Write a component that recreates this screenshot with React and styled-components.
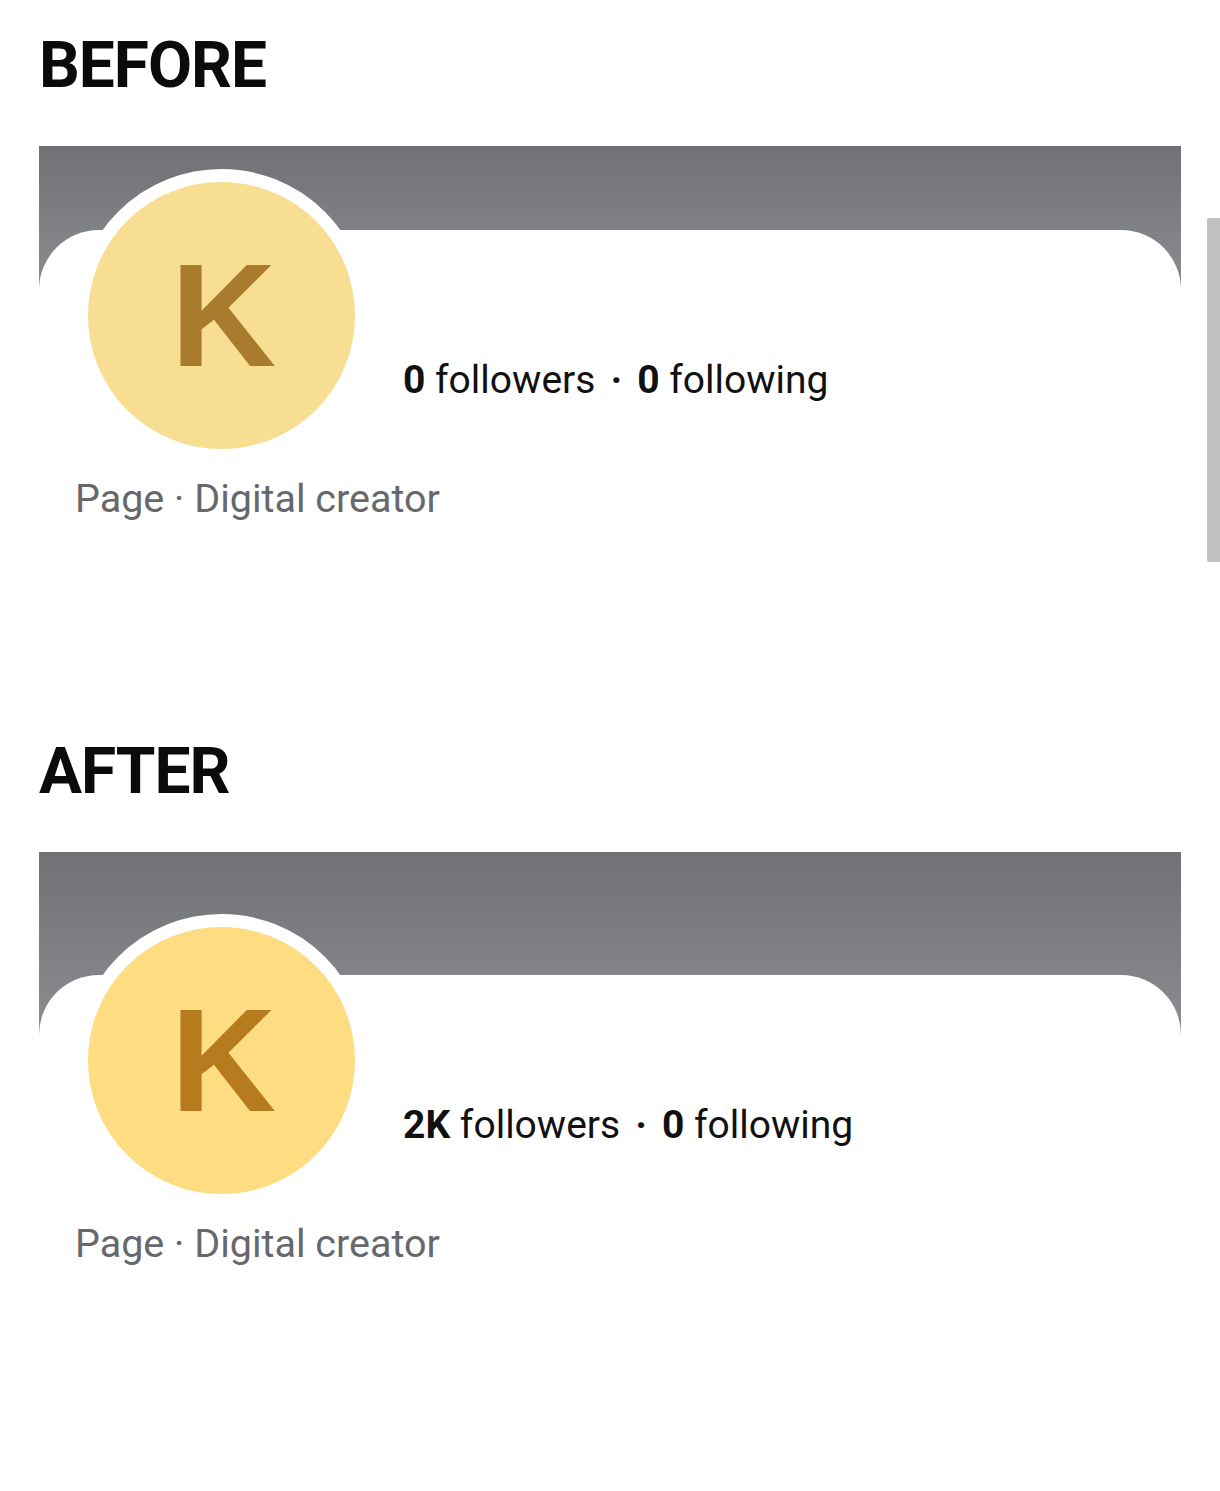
import React from "react";
import styled, { createGlobalStyle } from "styled-components";

const GlobalStyle = createGlobalStyle`
  html, body {
    margin: 0;
    padding: 0;
    background: #ffffff;
  }
  body {
    font-family: Roboto, "Noto Sans", "Liberation Sans", sans-serif;
    color: #111111;
  }
`;

const Page = styled.main`
  position: relative;
  min-height: 1491px;
  padding: 34px 39px 0 39px;
  box-sizing: border-box;
`;

const Section = styled.section`
  display: flex;
  flex-direction: column;
  margin-bottom: ${(p) => p.$spaceAfter}px;
`;

const Heading = styled.h1`
  margin: 0 0 48px 0;
  font-family: Roboto, "Liberation Sans", sans-serif;
  font-weight: 700;
  font-size: 64px;
  line-height: 64px;
  letter-spacing: -1px;
  color: #0b0b0b;
`;

const Profile = styled.div`
  display: flex;
  flex-direction: column;
`;

const Cover = styled.div`
  height: ${(p) => p.$band + 60}px;
  background: linear-gradient(180deg, #6f7174 0%, #8b8d90 100%);
`;

const Card = styled.div`
  margin-top: -60px;
  background: #ffffff;
  border-radius: 60px 60px 0 0;
  padding: 0 36px;
  display: flex;
  flex-direction: column;
`;

const HeaderRow = styled.div`
  display: flex;
  align-items: flex-end;
  margin-top: -61px;
`;

const Avatar = styled.div`
  flex: none;
  width: 267px;
  height: 267px;
  border: 13px solid #ffffff;
  border-radius: 50%;
  background: ${(p) => p.$fill};
  display: flex;
  align-items: center;
  justify-content: center;
`;

const Initial = styled.span`
  font-family: "Liberation Sans", Arial, sans-serif;
  font-weight: 700;
  font-size: 146px;
  line-height: 146px;
  color: ${(p) => p.$ink};
  transform: translate(2px, 0);
`;

const Stats = styled.div`
  margin: 0 0 59px 35px;
  font-size: 39px;
  line-height: 46px;
  color: #111111;
  white-space: nowrap;
`;

const Count = styled.b`
  font-weight: 700;
`;

const Dot = styled.span`
  display: inline-block;
  margin: 0 15px;
  font-weight: 700;
`;

const Category = styled.div`
  margin-top: 14px;
  font-size: 39.5px;
  line-height: 46px;
  color: #66686b;
`;

const Scrollbar = styled.div`
  position: absolute;
  top: 218px;
  right: 0;
  width: 13px;
  height: 344px;
  background: #c1c1c1;
  border-radius: 2px 0 0 2px;
`;

const snapshots = [
  {
    title: "BEFORE",
    band: 84,
    followers: "0",
    following: "0",
    fill: "#f8de93",
    ink: "#a97b2f",
    spaceAfter: 218,
  },
  {
    title: "AFTER",
    band: 123,
    followers: "2K",
    following: "0",
    fill: "#fddc82",
    ink: "#b67a1f",
    spaceAfter: 0,
  },
];

function ProfileHeader({ band, followers, following, fill, ink }) {
  return (
    <Profile>
      <Cover $band={band} />
      <Card>
        <HeaderRow>
          <Avatar $fill={fill}>
            <Initial $ink={ink}>K</Initial>
          </Avatar>
          <Stats>
            <Count>{followers}</Count> followers
            <Dot>·</Dot>
            <Count>{following}</Count> following
          </Stats>
        </HeaderRow>
        <Category>Page · Digital creator</Category>
      </Card>
    </Profile>
  );
}

export default function App() {
  return (
    <>
      <GlobalStyle />
      <Page>
        {snapshots.map((s) => (
          <Section key={s.title} $spaceAfter={s.spaceAfter}>
            <Heading>{s.title}</Heading>
            <ProfileHeader {...s} />
          </Section>
        ))}
        <Scrollbar />
      </Page>
    </>
  );
}
